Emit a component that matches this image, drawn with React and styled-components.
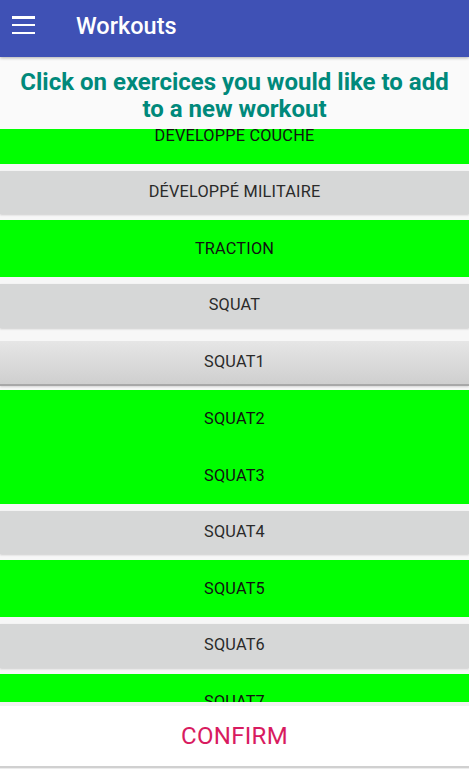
import React, { useLayoutEffect, useRef } from "react";
import styled, { createGlobalStyle } from "styled-components";

const GlobalStyle = createGlobalStyle`
  html, body, #root {
    margin: 0;
    padding: 0;
    height: 100%;
  }
  body {
    font-family: Roboto, "Noto Sans", sans-serif;
    background: #fafafa;
    overflow: hidden;
  }
`;

const exercises = [
  { name: "DEVELOPPE COUCHE", selected: true },
  { name: "DÉVELOPPÉ MILITAIRE", selected: false },
  { name: "TRACTION", selected: true },
  { name: "SQUAT", selected: false },
  { name: "SQUAT1", selected: false, focused: true },
  { name: "SQUAT2", selected: true },
  { name: "SQUAT3", selected: true },
  { name: "SQUAT4", selected: false },
  { name: "SQUAT5", selected: true },
  { name: "SQUAT6", selected: false },
  { name: "SQUAT7", selected: true },
  { name: "SQUAT8", selected: false },
];

const Screen = styled.div`
  height: 769px;
  display: flex;
  flex-direction: column;
  background: #fafafa;
`;

const AppBar = styled.header`
  height: 57px;
  flex-shrink: 0;
  background: #3f51b5;
  display: flex;
  align-items: center;
  padding-left: 12px;
  gap: 20px;
  box-shadow: 0 1px 3px rgba(0, 0, 0, 0.3);
  position: relative;
  z-index: 2;
`;

const MenuButton = styled.div`
  width: 23px;
  height: 18px;
  display: flex;
  flex-direction: column;
  justify-content: space-between;
  margin-top: -7px;
  span {
    display: block;
    height: 2.5px;
    background: #fff;
  }
`;

const Title = styled.h1`
  margin: 0 0 0 21px;
  color: #fff;
  font-size: 23.5px;
  font-weight: 500;
  margin-top: -6px;
`;

const Intro = styled.div`
  height: 72px;
  flex-shrink: 0;
  display: flex;
  align-items: center;
  justify-content: center;
  text-align: center;
  color: #00897b;
  font-size: 24px;
  font-weight: 700;
  line-height: 27px;
  padding: 6px 10px 0;
  box-sizing: border-box;
`;

const List = styled.div`
  flex: 1;
  overflow: hidden;
  background: #f7f7f7;
`;

const Slot = styled.div`
  height: 56.67px;
  box-sizing: border-box;
  display: flex;
  align-items: center;
  justify-content: center;
  background: ${(p) => (p.selected ? "#00ff00" : "transparent")};
  padding: ${(p) => (p.selected ? "0" : "7px 0 6px")};
`;

const ExerciseButton = styled.div`
  width: 100%;
  height: 100%;
  display: flex;
  align-items: center;
  justify-content: center;
  font-size: 16.3px;
  letter-spacing: 0.2px;
  padding-bottom: ${(p) => (p.selected ? "0" : "2px")};
  box-sizing: border-box;
  color: ${(p) => (p.selected ? "#111" : "#2a2a2a")};
  background: ${(p) =>
    p.selected
      ? "transparent"
      : p.focused
      ? "linear-gradient(#e6e6e6, #cfcfcf)"
      : "#d6d7d7"};
  box-shadow: ${(p) =>
    p.selected
      ? "none"
      : p.focused
      ? "0 2px 0 #a8a8a8, 0 3px 2px rgba(0,0,0,0.15)"
      : "0 1px 2px rgba(0, 0, 0, 0.18)"};
`;

const Footer = styled.div`
  height: 67px;
  flex-shrink: 0;
  box-sizing: border-box;
  background: #f2f2f2;
  padding-top: 4px;
  padding-bottom: 3px;
  display: flex;
  flex-direction: column;
`;

const ConfirmButton = styled.div`
  flex: 1;
  background: #fff;
  display: flex;
  align-items: center;
  justify-content: center;
  color: #d81b60;
  font-size: 24px;
  letter-spacing: 0.3px;
  box-shadow: 0 2px 1px #d0d0d0;
`;

export default function App() {
  const listRef = useRef(null);

  useLayoutEffect(() => {
    if (listRef.current) listRef.current.scrollTop = 22;
  }, []);

  return (
    <Screen>
      <GlobalStyle />
      <AppBar>
        <MenuButton>
          <span />
          <span />
          <span />
        </MenuButton>
        <Title>Workouts</Title>
      </AppBar>
      <Intro>Click on exercices you would like to add to a new workout</Intro>
      <List ref={listRef}>
        {exercises.map((ex) => (
          <Slot key={ex.name} selected={ex.selected}>
            <ExerciseButton selected={ex.selected} focused={ex.focused}>
              {ex.name}
            </ExerciseButton>
          </Slot>
        ))}
      </List>
      <Footer>
        <ConfirmButton>CONFIRM</ConfirmButton>
      </Footer>
    </Screen>
  );
}
